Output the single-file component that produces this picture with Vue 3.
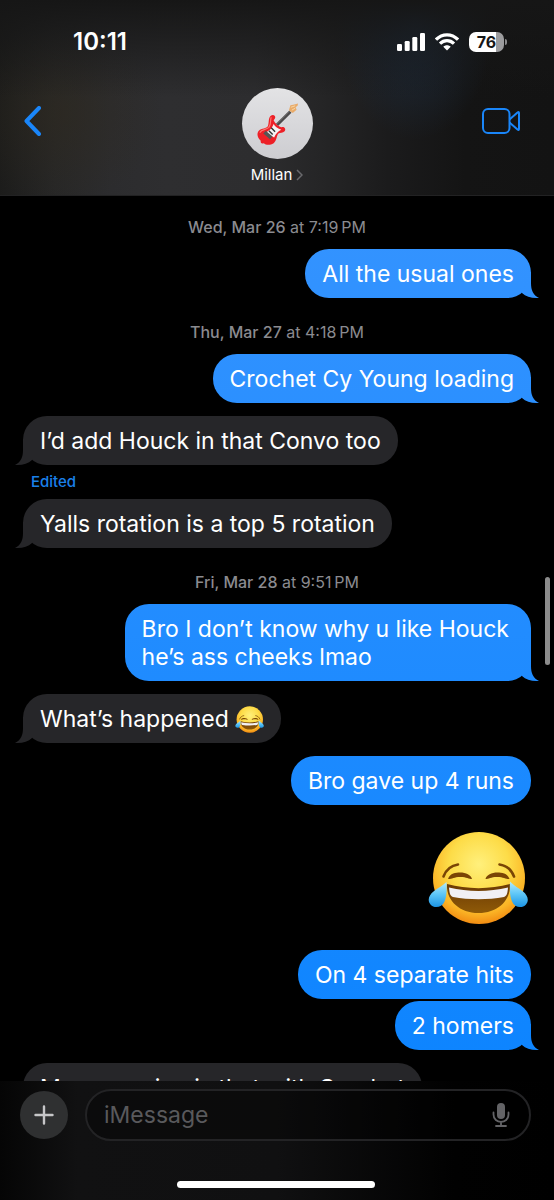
<script setup>
import { ref } from 'vue'

const draft = ref('')

const thread = [
  { kind: 'stamp', day: 'Wed, Mar 26', time: 'at 7:19\u202fPM' },
  { kind: 'sent', text: 'All the usual ones', tail: true },
  { kind: 'stamp', day: 'Thu, Mar 27', time: 'at 4:18\u202fPM' },
  { kind: 'sent', text: 'Crochet Cy Young loading', tail: true },
  { kind: 'received', text: 'I’d add Houck in that Convo too', tail: true, gap: true },
  { kind: 'edited' },
  { kind: 'received', text: 'Yalls rotation is a top 5 rotation', tail: true },
  { kind: 'stamp', day: 'Fri, Mar 28', time: 'at 9:51\u202fPM' },
  { kind: 'sent', text: 'Bro I don’t know why u like Houck he’s ass cheeks lmao', tail: true },
  { kind: 'received', text: 'What’s happened', joy: true, tail: true, gap: true },
  { kind: 'sent', text: 'Bro gave up 4 runs', gap: true },
  { kind: 'joy' },
  { kind: 'sent', text: 'On 4 separate hits' },
  { kind: 'sent', text: '2 homers', tail: true, close: true },
  { kind: 'received', text: 'My reasoning is that with Crochet', gap: true },
]
</script>

<template>
  <div class="phone">
    <svg class="defs" aria-hidden="true">
      <defs>
        <radialGradient id="face" cx="50%" cy="35%" r="65%">
          <stop offset="0" stop-color="#fff07c" />
          <stop offset="0.5" stop-color="#fddc48" />
          <stop offset="0.82" stop-color="#fbb526" />
          <stop offset="1" stop-color="#f28c12" />
        </radialGradient>
        <linearGradient id="mouth" x1="0" y1="0" x2="0" y2="1">
          <stop offset="0" stop-color="#6b3a04" />
          <stop offset="1" stop-color="#8f5a08" />
        </linearGradient>
        <linearGradient id="tear" x1="0" y1="0" x2="0" y2="1">
          <stop offset="0" stop-color="#b4ecfd" />
          <stop offset="0.5" stop-color="#5cc5f7" />
          <stop offset="1" stop-color="#1c94e4" />
        </linearGradient>
        <symbol id="joy" viewBox="0 0 100 94">
          <circle cx="51" cy="47" r="46" fill="url(#face)" />
          <g fill="none" stroke="#7a4505" stroke-linecap="round">
            <path d="M15.500 45.500C18 39 23 34.500 30 33.500" stroke-width="2.600" />
            <path d="M86 45.500C83.500 39 78.500 34.500 71.500 33.500" stroke-width="2.600" />
          </g>
          <path d="M20 48C22 42 28 41.500 32 41.500C38 41.500 43 44 44 48C41 48 38 45.800 32 46C26 46 23 48.500 20 48Z" fill="#7a4505" />
          <path d="M81.500 48C79.500 42 73.500 41.500 69.500 41.500C63.500 41.500 58.500 44 57.500 48C60.500 48 63.500 45.800 69.500 46C75.500 46 78.500 48.500 81.500 48Z" fill="#7a4505" />
          <path d="M19 53C39 58.500 62 58.500 82 53C83 69 70 82 50.500 82C31 82 18 69 19 53Z" fill="url(#mouth)" />
          <path d="M21 56.500C40 61 61 61 80 56.500C79.500 62 79 65 76 66C60 69 41 69 25 66C22 65 21.500 62 21 56.500Z" fill="#f1f0f4" />
          <path d="M18.500 51C19 60 18.500 66 16.500 70.500C14 76.500 6.500 78 2.500 73.500C-1 69.500 1 64 5.500 60.500C10 57 14 55 18.500 51Z" fill="url(#tear)" />
          <path d="M82 50.500C81.500 60 82 66 84 70.500C86.500 76.500 94 78 98 73.500C101.500 69.500 99.500 64 95 60.500C90.500 57 86.500 55 82 50.500Z" fill="url(#tear)" />
        </symbol>
      </defs>
    </svg>

    <header class="top">
      <div class="status">
        <time class="clock">10:11</time>
        <div class="indicators">
          <svg width="28" height="18" viewBox="0 0 28 18" fill="#fff" role="img" aria-label="Signal">
            <rect x="0" y="11" width="5" height="7" rx="1.300" />
            <rect x="7.700" y="8" width="5" height="10" rx="1.300" />
            <rect x="15.300" y="4" width="5" height="14" rx="1.300" />
            <rect x="23" y="0" width="5" height="18" rx="1.300" />
          </svg>
          <svg width="24" height="18" viewBox="0 0 24 18" role="img" aria-label="Wi-Fi">
            <g fill="none" stroke="#fff" stroke-width="3.200">
              <path d="M1 6.600C7.200 0.200 16.800 0.200 23 6.600" />
              <path d="M5 10.700C9 6.700 15 6.700 19 10.700" />
            </g>
            <path d="M12 17.500L8.300 13.800C10.300 11.800 13.700 11.800 15.700 13.800Z" fill="#fff" />
          </svg>
          <div class="battery"><span class="cell">76</span></div>
        </div>
      </div>

      <nav class="bar">
        <button class="icon" aria-label="Back">
          <svg width="17" height="30" viewBox="0 0 17 30" fill="none" stroke="#1a86f9" stroke-width="4" stroke-linecap="round" stroke-linejoin="round">
            <path d="M15 2L2.500 15L15 28" />
          </svg>
        </button>
        <button class="contact">
          <span class="avatar">
            <svg width="44" height="44" viewBox="0 0 46 46" aria-hidden="true">
              <path d="M23 24L37 10" stroke="#4b4a4b" stroke-width="3.200" />
              <path d="M22.500 23L36.500 9" stroke="#8a8789" stroke-width="0.800" />
              <path d="M35.500 8.500L37 3.500L40 3L45 1.500L44.500 4L42.500 5.500L43.500 8L39.500 11.500Z" fill="#e9ab69" />
              <path d="M37.500 5.500L42 4M38.500 8.500L42 6.500" stroke="#f8d7a8" stroke-width="1" />
              <path d="M16.500 14.500C19 12.500 22 14.500 21 17L19.500 19C21 22.500 25 26 28 26.500C30 25 33 28 31 30.500C29 32.500 26.500 31.500 24.500 33C22.500 35 23 40 19.500 43C15 46 11 44.500 9 43C7 44 5.500 42.500 6 40.500C2.500 37 1.500 33 4 30C7 27 12 28 13.500 25C15 22 13.500 17 16.500 14.500Z" fill="#ed2027" />
              <path d="M17 16C15.500 19 17.500 22 14.500 26.500C12 29 7 28.500 5 32" fill="none" stroke="#ff7770" stroke-width="1.200" />
              <path d="M19.500 23C21 26 24 28 27.500 29C24 30.500 22 33 20 37L14.500 34L11.500 31.500C16 29.500 18 27 19.500 23Z" fill="#f4f3f3" />
              <path d="M17 27L21 31M14.500 30L18.500 34" stroke="#333" stroke-width="1.500" />
              <path d="M10 31.500L17 37.500" stroke="#555" stroke-width="4" />
            </svg>
          </span>
          <span class="name">
            Millan
            <svg width="7" height="12" viewBox="0 0 7 12" fill="none" stroke="#69696c" stroke-width="1.500" aria-hidden="true">
              <path d="M1 1L6 6L1 11" />
            </svg>
          </span>
        </button>
        <button class="icon video" aria-label="FaceTime">
          <svg width="38" height="26" viewBox="0 0 38 26" fill="none" stroke="#1a86f9" stroke-width="2" stroke-linejoin="round">
            <rect x="1" y="1" width="26.500" height="24" rx="5" />
            <path d="M27.500 11.500L35.800 4.300Q37 3.500 37 5V21Q37 22.500 35.800 21.700L27.500 14.500" />
          </svg>
        </button>
      </nav>
    </header>

    <main class="thread">
      <template v-for="(item, i) in thread" :key="i">
        <p v-if="item.kind === 'stamp'" class="stamp"><b>{{ item.day }}</b> {{ item.time }}</p>
        <button v-else-if="item.kind === 'edited'" class="edited">Edited</button>
        <svg v-else-if="item.kind === 'joy'" class="big-joy" role="img" aria-label="Face with tears of joy"><use href="#joy" /></svg>
        <p v-else class="bubble" :class="[item.kind, { tail: item.tail, gap: item.gap, close: item.close }]">
          {{ item.text }}
          <svg v-if="item.joy" class="small-joy" role="img" aria-label="Face with tears of joy"><use href="#joy" /></svg>
        </p>
      </template>
      <div class="scroll-thumb"></div>
    </main>

    <footer class="bottom">
      <div class="composer">
        <button class="plus" aria-label="Add attachment">
          <svg width="20" height="20" viewBox="0 0 20 20" stroke="#c6c6c8" stroke-width="2.400" stroke-linecap="round">
            <path d="M10 1.500V18.500M1.500 10H18.500" />
          </svg>
        </button>
        <div class="field">
          <input v-model="draft" type="text" placeholder="iMessage" aria-label="iMessage" />
          <button class="icon" aria-label="Dictate">
            <svg width="18" height="26" viewBox="0 0 18 26" fill="none" stroke="#636366" stroke-width="1.800" stroke-linecap="round">
              <rect x="5" y="1" width="8" height="16" rx="4" fill="#636366" stroke="none" />
              <path d="M1.500 10.500V12.500C1.500 22.300 16.500 22.300 16.500 12.500V10.500M9 20V24M4 24H14" />
            </svg>
          </button>
        </div>
      </div>
      <div class="home"></div>
    </footer>
  </div>
</template>

<style>
body {
  margin: 0;
  background: #000;
}
</style>

<style scoped>
.phone {
  display: flex;
  flex-direction: column;
  height: 100vh;
  background: #000;
  color: #fff;
  font-family: Inter, "Noto Sans", sans-serif;
}
.defs {
  position: absolute;
  width: 0;
  height: 0;
}
button {
  padding: 0;
  border: 0;
  background: none;
  color: inherit;
  font: inherit;
}
svg {
  display: block;
  flex: none;
}
p {
  margin: 0;
}

.top {
  flex: none;
  padding-bottom: 11px;
  border-bottom: 1px solid #222223;
  background:
    linear-gradient(#161616, rgba(22, 22, 22, 0) 50%),
    radial-gradient(ellipse 80px 120px at 75% 10%, rgba(32, 52, 76, 0.7), rgba(32, 52, 76, 0)),
    radial-gradient(ellipse 100px 90px at 11% 58%, rgba(48, 42, 30, 0.5), rgba(48, 42, 30, 0)),
    linear-gradient(90deg, #1c1c1b, #272727 10%, #2c2c2e 20%, #2e2e30 30%, #2d2d2f 46%, #252526 58%, #1b1b1c 70%, #141414 84%, #131313);
}
.status {
  display: flex;
  align-items: center;
  justify-content: space-between;
  padding: 28px 50px 0 73px;
}
.clock {
  font-size: 24px;
  line-height: 28px;
  font-weight: 600;
}
.indicators {
  display: flex;
  align-items: center;
  gap: 10px;
}
.battery {
  position: relative;
  width: 35px;
  height: 20px;
  border-radius: 7px;
  background: linear-gradient(90deg, #fff 76%, #9c9c9e 76%);
}
.battery::after {
  content: "";
  position: absolute;
  left: 36px;
  top: 7px;
  width: 2px;
  height: 6px;
  border-radius: 0 2px 2px 0;
  background: #8a8a8c;
}
.cell {
  display: block;
  color: #161616;
  font-size: 16px;
  line-height: 20px;
  font-weight: 700;
  text-align: center;
}
.bar {
  display: grid;
  grid-template-columns: 1fr auto 1fr;
  align-items: start;
  padding: 32px 34px 0 24px;
}
.bar .icon {
  justify-self: start;
  margin-top: 18px;
}
.bar .video {
  justify-self: end;
  margin-top: 20px;
}
.contact {
  display: flex;
  flex-direction: column;
  align-items: center;
  gap: 7px;
  margin-left: 10px;
}
.avatar {
  display: grid;
  place-items: center;
  width: 71px;
  height: 71px;
  border-radius: 50%;
  background: linear-gradient(#e3e3e5, #cdcdd1);
}
.name {
  display: flex;
  align-items: center;
  gap: 4px;
  font-size: 15px;
  line-height: 18px;
}

.thread {
  position: relative;
  flex: 1;
  min-height: 0;
  overflow: hidden;
  display: flex;
  flex-direction: column;
  align-items: flex-start;
  padding: 0 23px;
}
.thread > * {
  flex: none;
}
.stamp {
  align-self: center;
  padding: 25px 0 13px;
  color: #8b8b90;
  font-size: 16px;
  line-height: 18px;
}
.stamp:first-child {
  padding-top: 22px;
}
.stamp b {
  font-weight: 500;
}
.bubble {
  position: relative;
  box-sizing: border-box;
  max-width: 80%;
  padding: 11px 17px 10px;
  border-radius: 24px;
  font-size: 23px;
  line-height: 28px;
}
.gap {
  margin-top: 13px;
}
.close {
  margin-top: 2px;
}
.sent,
.sent::after {
  background: linear-gradient(#3e97ff, #0782ff) fixed;
}
.sent {
  align-self: flex-end;
}
.received,
.received::after {
  background: #262629;
}
.tail::after {
  content: "";
  position: absolute;
  bottom: 0;
  width: 25px;
  height: 26px;
}
.sent.tail::after {
  right: -8px;
  clip-path: path("M8 0H17V11C17 18 19 23 25 26C18 26.500 12 25 8 21Z");
}
.received.tail::after {
  left: -8px;
  clip-path: path("M17 0H8V11C8 18 6 23 0 26C7 26.500 13 25 17 21Z");
}
.edited {
  margin: 8px;
  color: #1a80ea;
  font-size: 15px;
  line-height: 18px;
  font-weight: 500;
}
.small-joy {
  display: inline-block;
  width: 29px;
  height: 27px;
  vertical-align: -6px;
}
.big-joy {
  align-self: flex-end;
  width: 100px;
  height: 94px;
  margin: 26px 3px 25px;
}
.scroll-thumb {
  position: absolute;
  top: 43%;
  right: 4px;
  width: 5px;
  height: 88px;
  border-radius: 3px;
  background: #8c8c8c;
}

.bottom {
  flex: none;
  padding: 8px 23px 12px 20px;
  background: linear-gradient(90deg, #050505, #111112 14%, #101011 50%, #010101 82%, #000);
}
.composer {
  display: flex;
  align-items: center;
  gap: 17px;
}
.plus {
  display: grid;
  place-items: center;
  flex: none;
  width: 48px;
  height: 48px;
  border-radius: 50%;
  background: #2f3031;
}
.field {
  display: flex;
  align-items: center;
  flex: 1;
  min-width: 0;
  box-sizing: border-box;
  height: 52px;
  padding: 0 19px 0 17px;
  border: 2px solid #232325;
  border-radius: 26px;
  background: rgba(0, 0, 0, 0.3);
}
.field input {
  flex: 1;
  min-width: 0;
  padding: 0;
  border: 0;
  outline: 0;
  background: none;
  color: #fff;
  font: inherit;
  font-size: 23px;
  line-height: 28px;
}
.field input::placeholder {
  color: #59595c;
  opacity: 1;
}
.home {
  width: 198px;
  height: 7px;
  margin: 40px auto 0;
  border-radius: 4px;
  background: #fff;
}
</style>
